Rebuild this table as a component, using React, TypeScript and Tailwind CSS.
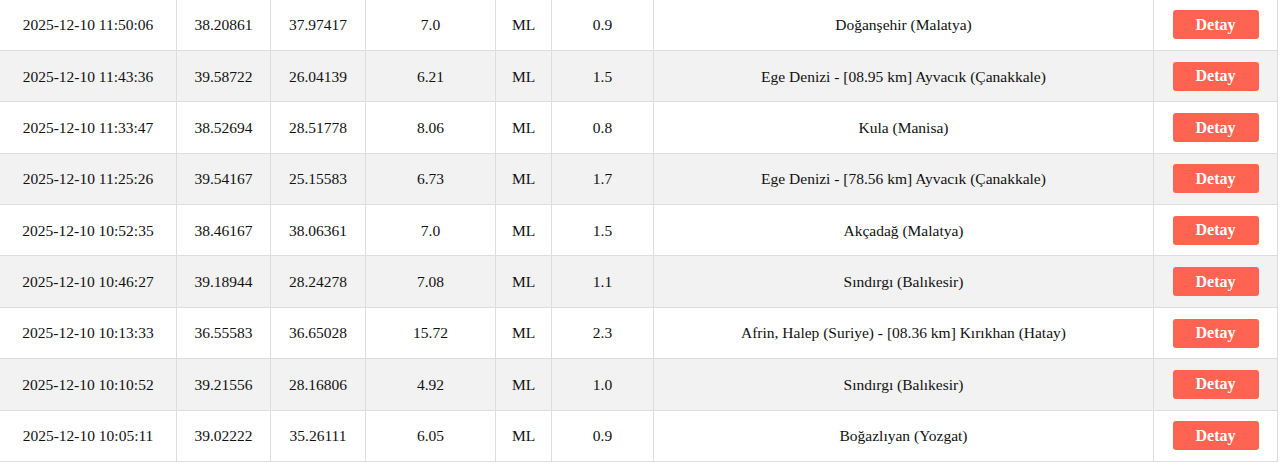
import React from "react";

const rows = [
  ["2025-12-10 11:50:06", "38.20861", "37.97417", "7.0", "ML", "0.9", "Doğanşehir (Malatya)"],
  ["2025-12-10 11:43:36", "39.58722", "26.04139", "6.21", "ML", "1.5", "Ege Denizi - [08.95 km] Ayvacık (Çanakkale)"],
  ["2025-12-10 11:33:47", "38.52694", "28.51778", "8.06", "ML", "0.8", "Kula (Manisa)"],
  ["2025-12-10 11:25:26", "39.54167", "25.15583", "6.73", "ML", "1.7", "Ege Denizi - [78.56 km] Ayvacık (Çanakkale)"],
  ["2025-12-10 10:52:35", "38.46167", "38.06361", "7.0", "ML", "1.5", "Akçadağ (Malatya)"],
  ["2025-12-10 10:46:27", "39.18944", "28.24278", "7.08", "ML", "1.1", "Sındırgı (Balıkesir)"],
  ["2025-12-10 10:13:33", "36.55583", "36.65028", "15.72", "ML", "2.3", "Afrin, Halep (Suriye) - [08.36 km] Kırıkhan (Hatay)"],
  ["2025-12-10 10:10:52", "39.21556", "28.16806", "4.92", "ML", "1.0", "Sındırgı (Balıkesir)"],
  ["2025-12-10 10:05:11", "39.02222", "35.26111", "6.05", "ML", "0.9", "Boğazlıyan (Yozgat)"],
];

export default function App() {
  return (
    <div
      className="w-[1280px] h-[463px] overflow-hidden bg-white text-[#111] text-[15.5px]"
      style={{ fontFamily: '"Liberation Serif", "Times New Roman", serif' }}
    >
      <div className="w-[1278px] -mt-[0.4px]">
        {rows.map((r, i) => (
          <div
            key={i}
            className={`grid grid-cols-[177px_94px_95px_130px_56px_102px_500px_124px] h-[51.375px] border-b border-[#dddddd] ${
              i % 2 === 1 ? "bg-[#f2f2f2]" : "bg-white"
            }`}
          >
            {r.map((c, j) => (
              <div
                key={j}
                className="flex items-center justify-center border-r border-[#dddddd] whitespace-nowrap"
              >
                {c}
              </div>
            ))}
            <div className="flex items-center justify-center border-r border-[#dddddd]">
              <button className="w-[86px] h-[29px] rounded-[3px] bg-[#ff6352] text-white font-bold text-[16px] leading-none">
                Detay
              </button>
            </div>
          </div>
        ))}
      </div>
    </div>
  );
}
